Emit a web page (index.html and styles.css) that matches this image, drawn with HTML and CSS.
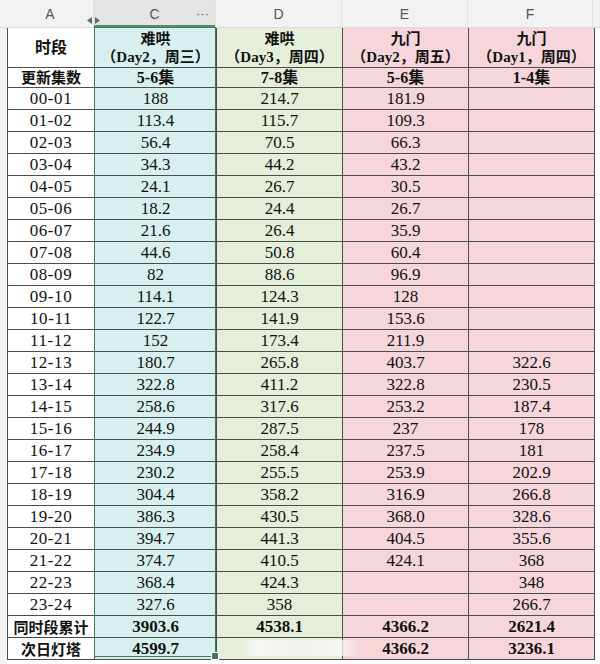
FILE: index.html
```html
<!DOCTYPE html>
<html>
<head>
<meta charset="utf-8">
<link rel="stylesheet" href="styles.css">
</head>
<body>
<div class="sheet">
  <div class="colheads">
    <div class="ch corner"></div>
    <div class="ch">A<span class="hidden-mark"><svg width="13" height="7" viewBox="0 0 13 7"><polygon points="0,3.5 5,0 5,7" fill="#666"/><polygon points="13,3.5 8,0 8,7" fill="#666"/></svg></span></div>
    <div class="ch sel">C<span class="dots">···</span></div>
    <div class="ch">D</div>
    <div class="ch">E</div>
    <div class="ch">F</div>
    <div class="ch tail"></div>
  </div>
  <div class="body">
    <div class="gutter"></div>
    <div class="tablewrap">
      <table class="grid">
        <colgroup>
          <col class="w-a"><col class="w-c"><col class="w-d"><col class="w-e"><col class="w-f">
        </colgroup>
        <thead>
          <tr class="r-head">
            <th class="ca">时段</th>
            <th class="cc">难哄<br>（Day2，周三）</th>
            <th class="cd">难哄<br>（Day3，周四）</th>
            <th class="ce">九门<br>（Day2，周五）</th>
            <th class="cf">九门<br>（Day1，周四）</th>
          </tr>
          <tr class="r-ep">
            <th class="ca">更新集数</th>
            <th class="cc">5-6集</th>
            <th class="cd">7-8集</th>
            <th class="ce">5-6集</th>
            <th class="cf">1-4集</th>
          </tr>
        </thead>
        <tbody>
          <tr class="r-data"><td class="ca t">00-01</td><td class="cc">188</td><td class="cd">214.7</td><td class="ce">181.9</td><td class="cf"></td></tr>
          <tr class="r-data"><td class="ca t">01-02</td><td class="cc">113.4</td><td class="cd">115.7</td><td class="ce">109.3</td><td class="cf"></td></tr>
          <tr class="r-data"><td class="ca t">02-03</td><td class="cc">56.4</td><td class="cd">70.5</td><td class="ce">66.3</td><td class="cf"></td></tr>
          <tr class="r-data"><td class="ca t">03-04</td><td class="cc">34.3</td><td class="cd">44.2</td><td class="ce">43.2</td><td class="cf"></td></tr>
          <tr class="r-data"><td class="ca t">04-05</td><td class="cc">24.1</td><td class="cd">26.7</td><td class="ce">30.5</td><td class="cf"></td></tr>
          <tr class="r-data"><td class="ca t">05-06</td><td class="cc">18.2</td><td class="cd">24.4</td><td class="ce">26.7</td><td class="cf"></td></tr>
          <tr class="r-data"><td class="ca t">06-07</td><td class="cc">21.6</td><td class="cd">26.4</td><td class="ce">35.9</td><td class="cf"></td></tr>
          <tr class="r-data"><td class="ca t">07-08</td><td class="cc">44.6</td><td class="cd">50.8</td><td class="ce">60.4</td><td class="cf"></td></tr>
          <tr class="r-data"><td class="ca t">08-09</td><td class="cc">82</td><td class="cd">88.6</td><td class="ce">96.9</td><td class="cf"></td></tr>
          <tr class="r-data"><td class="ca t">09-10</td><td class="cc">114.1</td><td class="cd">124.3</td><td class="ce">128</td><td class="cf"></td></tr>
          <tr class="r-data"><td class="ca t">10-11</td><td class="cc">122.7</td><td class="cd">141.9</td><td class="ce">153.6</td><td class="cf"></td></tr>
          <tr class="r-data"><td class="ca t">11-12</td><td class="cc">152</td><td class="cd">173.4</td><td class="ce">211.9</td><td class="cf"></td></tr>
          <tr class="r-data"><td class="ca t">12-13</td><td class="cc">180.7</td><td class="cd">265.8</td><td class="ce">403.7</td><td class="cf">322.6</td></tr>
          <tr class="r-data"><td class="ca t">13-14</td><td class="cc">322.8</td><td class="cd">411.2</td><td class="ce">322.8</td><td class="cf">230.5</td></tr>
          <tr class="r-data"><td class="ca t">14-15</td><td class="cc">258.6</td><td class="cd">317.6</td><td class="ce">253.2</td><td class="cf">187.4</td></tr>
          <tr class="r-data"><td class="ca t">15-16</td><td class="cc">244.9</td><td class="cd">287.5</td><td class="ce">237</td><td class="cf">178</td></tr>
          <tr class="r-data"><td class="ca t">16-17</td><td class="cc">234.9</td><td class="cd">258.4</td><td class="ce">237.5</td><td class="cf">181</td></tr>
          <tr class="r-data"><td class="ca t">17-18</td><td class="cc">230.2</td><td class="cd">255.5</td><td class="ce">253.9</td><td class="cf">202.9</td></tr>
          <tr class="r-data"><td class="ca t">18-19</td><td class="cc">304.4</td><td class="cd">358.2</td><td class="ce">316.9</td><td class="cf">266.8</td></tr>
          <tr class="r-data"><td class="ca t">19-20</td><td class="cc">386.3</td><td class="cd">430.5</td><td class="ce">368.0</td><td class="cf">328.6</td></tr>
          <tr class="r-data"><td class="ca t">20-21</td><td class="cc">394.7</td><td class="cd">441.3</td><td class="ce">404.5</td><td class="cf">355.6</td></tr>
          <tr class="r-data"><td class="ca t">21-22</td><td class="cc">374.7</td><td class="cd">410.5</td><td class="ce">424.1</td><td class="cf">368</td></tr>
          <tr class="r-data"><td class="ca t">22-23</td><td class="cc">368.4</td><td class="cd">424.3</td><td class="ce"></td><td class="cf">348</td></tr>
          <tr class="r-data"><td class="ca t">23-24</td><td class="cc">327.6</td><td class="cd">358</td><td class="ce"></td><td class="cf">266.7</td></tr>
        </tbody>
        <tfoot>
          <tr class="r-tot">
            <td class="ca lbl">同时段累计</td>
            <td class="cc b">3903.6</td>
            <td class="cd b">4538.1</td>
            <td class="ce b">4366.2</td>
            <td class="cf b">2621.4</td>
          </tr>
          <tr class="r-last">
            <td class="ca lbl">次日灯塔</td>
            <td class="cc b">4599.7</td>
            <td class="cd"></td>
            <td class="ce b">4366.2</td>
            <td class="cf b">3236.1</td>
          </tr>
        </tfoot>
      </table>
      <div class="selection"><span class="handle"></span></div>
      <div class="blur"></div>
    </div>
    <div class="gutter right"></div>
  </div>
</div>
</body>
</html>
```
FILE: styles.css
```css
html, body {
  margin: 0;
  padding: 0;
  background: #ffffff;
}
.sheet {
  width: 600px;
  height: 664px;
  overflow: hidden;
  display: flex;
  flex-direction: column;
}
.colheads {
  display: grid;
  grid-template-columns: 7px 87px 122px 126px 126px 125px 7px;
  height: 28px;
  background: #f2f2f2;
  border-bottom: 1px solid #dcdcdc;
  box-sizing: border-box;
}
.ch {
  position: relative;
  display: flex;
  align-items: center;
  justify-content: center;
  font-family: "Liberation Sans", Arial, sans-serif;
  font-size: 14px;
  color: #555;
  border-right: 1px solid #e2e2e2;
  padding-top: 1px;
}
.ch.corner, .ch.tail { border-right: none; }
.ch.sel {
  background: #e4e4e4;
  box-shadow: inset 0 -2px 0 #4f8f6c;
}
.dots {
  position: absolute;
  right: 6px;
  top: 6px;
  font-size: 13px;
  color: #666;
}
.hidden-mark {
  position: absolute;
  right: -7px;
  top: 17px;
  width: 13px;
  height: 7px;
  display: flex;
  z-index: 2;
}
.body {
  display: flex;
  flex: 1;
}
.gutter {
  width: 7px;
  background: #f2f2f2;
  flex: none;
}
.gutter.right {
  background: #fff;
}
.tablewrap {
  position: relative;
  width: 586px;
  flex: none;
}
.grid {
  border-collapse: collapse;
  table-layout: fixed;
  width: 587px;
  font-family: "Liberation Serif", "Times New Roman", "Noto Sans CJK SC", serif;
  color: #111;
}
.w-a { width: 87px; }
.w-c { width: 122px; }
.w-d { width: 126px; }
.w-e { width: 126px; }
.w-f { width: 126px; }
.grid th, .grid td {
  border: 1px solid #4d4d4d;
  padding: 0;
  text-align: center;
  vertical-align: middle;
  overflow: hidden;
  white-space: nowrap;
}
.grid th {
  font-weight: bold;
  font-size: 15px;
  line-height: 18px;
}
.r-head th { height: 39px; border-top: none; }
.r-ep th { height: 19px; font-size: 16px; }
.r-data td { height: 21px; font-size: 17px; }
.r-data td.t { letter-spacing: 0.6px; }
.r-tot td { height: 19px; font-size: 17px; }
.r-last td { height: 20px; font-size: 17px; }
.grid td.lbl {
  font-family: "Noto Sans CJK SC", sans-serif;
  font-size: 15px;
  font-weight: bold;
}
.grid td.b { font-weight: bold; }
.grid th.ca, .grid td.ca { background: #ffffff; }
.grid .cc { background: #d7f0ef; }
.grid .cd { background: #e5eed9; }
.grid .ce, .grid .cf { background: #f6d6da; }
.grid th.ca { font-size: 16px; }
.grid .r-ep th.ca { font-size: 15px; }
.selection {
  position: absolute;
  left: 87px;
  top: -1px;
  width: 122px;
  height: 630px;
  border: 1px solid #3f7a5b;
  box-sizing: border-box;
  pointer-events: none;
}
.handle {
  position: absolute;
  right: -4px;
  bottom: -4px;
  width: 6px;
  height: 6px;
  background: #3f7a5b;
  border: 1px solid #fff;
}
.blur {
  position: absolute;
  left: 232px;
  top: 612px;
  width: 120px;
  height: 16px;
  background: linear-gradient(90deg, rgba(255,255,255,0) 0%, rgba(250,250,248,0.85) 15%, rgba(240,240,238,0.9) 50%, rgba(250,250,250,0.8) 85%, rgba(255,255,255,0) 100%);
  pointer-events: none;
}
```
